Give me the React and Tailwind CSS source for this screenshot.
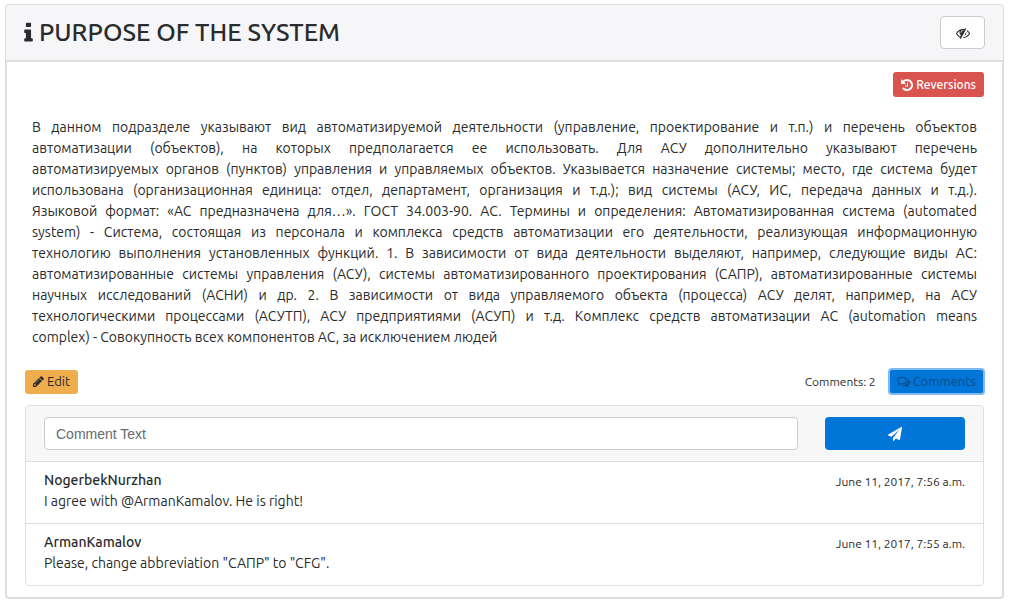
const ICONS = {
  info: {
    box: "576 0 640 1792",
    d: "M1216 1344v128q0 26-19 45t-45 19h-512q-26 0-45-19t-19-45v-128q0-26 19-45t45-19h64v-384h-64q-26 0-45-19t-19-45v-128q0-26 19-45t45-19h384q26 0 45 19t19 45v576h64q26 0 45 19t19 45zm-128-1152v192q0 26-19 45t-45 19h-256q-26 0-45-19t-19-45v-192q0-26 19-45t45-19h256q26 0 45 19t19 45z",
  },
  eyeSlash: {
    box: "0 0 1792 1792",
    d: "M555 1335l78-141q-87-63-136-159t-49-203q0-121 61-225-229 117-381 353 167 258 427 375zm389-759q0-20-14-34t-34-14q-125 0-214.500 89.500t-89.500 214.500q0 20 14 34t34 14 34-14 14-34q0-86 61-147t147-61q20 0 34-14t14-34zm363-191q0 7-1 9-105 188-315 566t-316 567l-49 89q-10 16-28 16-12 0-134-70-16-10-16-28 0-12 44-87-143-65-263.500-173t-208.500-245q-20-31-20-69t20-69q153-235 380-371t496-136q89 0 180 17l54-97q10-16 28-16 5 0 18 6t31 15.500 33 18.500 31.500 18.500 19.500 11.500q16 10 16 27zm37 447q0 139-79 253.500t-209 164.500l280-502q8 45 8 84zm448 128q0 35-20 69-39 64-109 145-150 172-347.500 267t-419.500 95l74-132q212-18 392.500-137t301.500-307q-115-179-282-294l63-112q95 64 182.500 153t144.500 184q20 34 20 69z",
  },
  history: {
    box: "128 0 1536 1792",
    d: "M1664 896q0 156-61 298t-164 245-245 164-298 61q-172 0-327-72.500t-264-204.500q-7-10-6.500-22.500t8.500-20.500l137-138q10-9 25-9 16 2 23 12 73 95 179 147t225 52q104 0 198.500-40.500t163.500-109.500 109.500-163.500 40.500-198.500-40.500-198.500-109.500-163.500-163.500-109.500-198.500-40.500q-98 0-188 35.500t-160 101.500l137 138q31 30 14 69-17 40-59 40h-448q-26 0-45-19t-19-45v-448q0-42 40-59 39-17 69 14l130 129q107-101 244.500-156.500t284.500-55.500q156 0 298 61t245 164 164 245 61 298zm-640-288v448q0 14-9 23t-23 9h-320q-14 0-23-9t-9-23v-64q0-14 9-23t23-9h224v-352q0-14 9-23t23-9h64q14 0 23 9t9 23z",
  },
  pencil: {
    box: "128 0 1536 1792",
    d: "M491 1536l91-91-235-235-91 91v107h128v128h107zm523-928q0-22-22-22-10 0-17 7l-542 542q-7 7-7 17 0 22 22 22 10 0 17-7l542-542q7-7 7-17zm-54-192l416 416-832 832h-416v-416zm683 96q0 53-37 90l-166 166-416-416 166-165q36-38 90-38 53 0 91 38l235 234q37 39 37 91z",
  },
  paperPlane: {
    box: "0 0 1792 1792",
    d: "M1764 11q33 24 27 64l-256 1536q-5 29-32 45-14 8-31 8-11 0-24-5l-453-185-242 295q-18 23-49 23-13 0-22-4-19-7-30.500-23.500t-11.500-36.500v-349l864-1059-1069 925-395-162q-37-14-40-55-2-40 32-59l1664-960q15-9 32-9 20 0 36 11z",
  },
  comments: {
    box: "0 0 1792 1792",
    d: "M704 384q-153 0-286 52t-211.500 141-78.500 191q0 82 53 158t149 132l97 56-35 84q34-20 62-39l44-31 53 10q78 14 153 14 153 0 286-52t211.500-141 78.500-191-78.500-191-211.500-141-286-52zm0-128q191 0 353.500 68.500t256.500 186.500 94 257-94 257-256.500 186.500-353.500 68.500q-86 0-176-16-124 88-278 128-36 9-86 16h-3q-11 0-20.500-8t-11.500-21q-1-3-1-6.500t.5-6.500 2-6l2.500-5 3.500-5.500 4-5 4.500-5 4-4.500q5-6 23-25t26-29.500 22.500-29 25-38.500 20.500-44q-124-72-195-177t-71-224q0-139 94-257t256.500-186.500 353.500-68.500zm822 1169q10 24 20.500 44t25 38.500 22.500 29 26 29.500 23 25q1 1 4 4.500t4.500 5 4 5 3.500 5.500l2.500 5 2 6 .5 6.500-1 6.500q-3 14-13 22t-22 7q-50-7-86-16-154-40-278-128-90 16-176 16-271 0-472-132 58 4 88 4 161 0 309-45t264-129q125-92 192-212t67-254q0-77-23-152 129 71 204 178t75 230q0 120-71 224.5t-195 176.500z",
  },
};

function Icon({ name, className }) {
  const { box, d } = ICONS[name];
  return (
    <svg viewBox={box} fill="currentColor" aria-hidden="true" className={className}>
      <path d={d} />
    </svg>
  );
}

const PURPOSE_LINES = [
  "В данном подразделе указывают вид автоматизируемой деятельности (управление, проектирование и т.п.) и перечень объектов",
  "автоматизации (объектов), на которых предполагается ее использовать. Для АСУ дополнительно указывают перечень",
  "автоматизируемых органов (пунктов) управления и управляемых объектов. Указывается назначение системы; место, где система будет",
  "использована (организационная единица: отдел, департамент, организация и т.д.); вид системы (АСУ, ИС, передача данных и т.д.).",
  "Языковой формат: «АС предназначена для…». ГОСТ 34.003-90. АС. Термины и определения: Автоматизированная система (automated",
  "system) - Система, состоящая из персонала и комплекса средств автоматизации его деятельности, реализующая информационную",
  "технологию выполнения установленных функций. 1. В зависимости от вида деятельности выделяют, например, следующие виды АС:",
  "автоматизированные системы управления (АСУ), системы автоматизированного проектирования (САПР), автоматизированные системы",
  "научных исследований (АСНИ) и др. 2. В зависимости от вида управляемого объекта (процесса) АСУ делят, например, на АСУ",
  "технологическими процессами (АСУТП), АСУ предприятиями (АСУП) и т.д. Комплекс средств автоматизации АС (automation means",
  "complex) - Совокупность всех компонентов АС, за исключением людей",
];

const COMMENTS = [
  {
    author: "NogerbekNurzhan",
    text: "I agree with @ArmanKamalov. He is right!",
    date: "June 11, 2017, 7:56 a.m.",
  },
  {
    author: "ArmanKamalov",
    text: 'Please, change abbreviation "САПР" to "CFG".',
    date: "June 11, 2017, 7:55 a.m.",
  },
];

function Comment({ author, text, date }) {
  return (
    <li className="flex items-start justify-between gap-4 border-t border-[#dedede] px-[18px] pt-2 pb-[11px]">
      <div>
        <h2 className="text-[14px] leading-[21px] font-medium">{author}</h2>
        <p className="text-[14px] leading-[21px]">{text}</p>
      </div>
      <time className="text-[12px] leading-6">{date}</time>
    </li>
  );
}

export default function App() {
  return (
    <main className="bg-white pt-1 pr-[9px] pb-1 pl-[5px] font-['Ubuntu','Noto_Sans',sans-serif] text-[#292b2c]">
      <section>
        <header className="flex items-center justify-between rounded-t border border-b-0 border-[#dedede] bg-[#f6f6f8] px-[18px] py-[11px]">
          <h1 className="flex items-center gap-[6px] text-[25px] leading-[33px] font-medium">
            <Icon name="info" className="h-6 w-[9px]" />
            PURPOSE OF THE SYSTEM
          </h1>
          <button
            type="button"
            aria-label="Hide section"
            className="flex h-[33px] w-[45px] items-center justify-center rounded border border-[#cccccc] bg-white"
          >
            <Icon name="eyeSlash" className="size-[14px]" />
          </button>
        </header>

        <div className="rounded-b border-2 border-[#dedede] px-[18px] pt-[10px] pb-[11px]">
          <div className="flex justify-end">
            <button
              type="button"
              className="flex h-[25px] items-center gap-[3px] rounded-[3px] bg-[#d9534f] px-2 text-[12px] font-medium text-white"
            >
              <Icon name="history" className="h-[14px] w-3" />
              Reversions
            </button>
          </div>

          <p className="mt-5 px-[7px] text-[14px] leading-[21px]">
            {PURPOSE_LINES.map((line) => (
              <span
                key={line}
                className="block text-justify [text-align-last:justify] last:[text-align-last:left]"
              >
                {line}{" "}
              </span>
            ))}
          </p>

          <div className="mt-[21px] flex items-center justify-between">
            <button
              type="button"
              className="flex h-6 items-center gap-[3px] rounded-[3px] bg-[#f0ad4e] px-2 text-[13px] text-[#292b2c]"
            >
              <Icon name="pencil" className="h-[13px] w-[11px]" />
              Edit
            </button>
            <div className="flex items-center gap-[13px]">
              <span className="text-[12px]">Comments: 2</span>
              <button
                type="button"
                className="flex h-[25px] items-center gap-[3px] rounded-[3px] border border-[#80baec] bg-[#0275d8] px-[7px] text-[13px] text-[#0a4a85] ring-1 ring-[#80baec]"
              >
                <Icon name="comments" className="size-[13px]" />
                Comments
              </button>
            </div>
          </div>

          <div className="mt-[11px] rounded border border-[#dedede]">
            <form
              className="flex gap-[27px] rounded-t bg-[#f7f7f7] px-[18px] py-[11px]"
              onSubmit={(event) => event.preventDefault()}
            >
              <input
                type="text"
                aria-label="Comment Text"
                placeholder="Comment Text"
                className="h-[33px] min-w-0 flex-1 rounded border border-[#cccccc] bg-white px-[11px] font-['Liberation_Sans',sans-serif] text-[14px] placeholder:text-[#636c72]"
              />
              <button
                type="submit"
                aria-label="Send comment"
                className="flex h-[33px] w-[140px] items-center justify-center rounded bg-[#0275d8] text-white"
              >
                <Icon name="paperPlane" className="size-[14px]" />
              </button>
            </form>
            <ul>
              {COMMENTS.map((comment) => (
                <Comment key={comment.author} {...comment} />
              ))}
            </ul>
          </div>
        </div>
      </section>
    </main>
  );
}
